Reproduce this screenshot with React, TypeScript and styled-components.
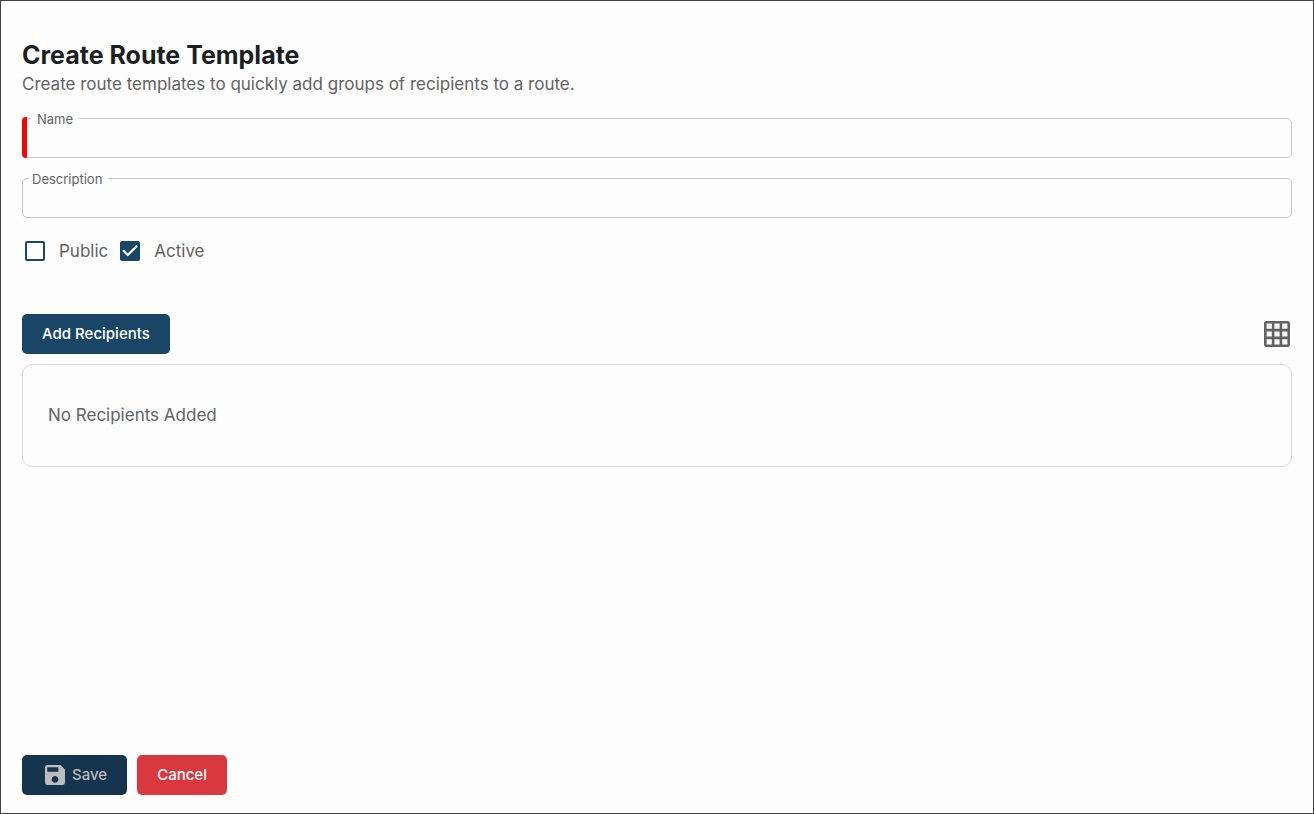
import React from "react";
import styled, { createGlobalStyle } from "styled-components";

const GlobalStyle = createGlobalStyle`
  *, *::before, *::after { box-sizing: border-box; }
  body {
    margin: 0;
    background: #fdfdfd;
    color: #626262;
    font-family: Inter, "Liberation Sans", sans-serif;
    font-size: 17px;
    line-height: 24px;
  }
  button, input { font: inherit; }
`;

const Page = styled.main`
  display: flex;
  flex-direction: column;
  min-height: 100vh;
  padding: 38px 21px 18px;
  border: 1px solid #444;
`;

const Title = styled.h1`
  margin: 0;
  color: #1c1f22;
  font-size: 25px;
  font-weight: 700;
  line-height: 33px;
`;

const Subtitle = styled.p`
  margin: 0 0 22px;
`;

const Form = styled.form`
  display: flex;
  flex: 1;
  flex-direction: column;
`;

const Field = styled.div<{ $required?: boolean }>`
  position: relative;
  margin-bottom: 20px;

  &::before {
    content: ${(p) => (p.$required ? '""' : "none")};
    position: absolute;
    top: -1px;
    bottom: 0;
    left: 0;
    width: 5px;
    border-radius: 4px 0 0 4px;
    background: #f00;
  }
`;

const FieldLabel = styled.label<{ $required?: boolean }>`
  position: absolute;
  top: -8px;
  left: ${(p) => (p.$required ? 9 : 6)}px;
  padding: 0 6px 0 ${(p) => (p.$required ? 6 : 4)}px;
  background: #fdfdfd;
  font-size: 13px;
  line-height: 18px;
`;

const TextInput = styled.input`
  display: block;
  width: 100%;
  height: 40px;
  padding: 0 14px;
  border: 1px solid #c8c8c8;
  border-radius: 5px;
  outline: none;
  background: transparent;
  color: #1c1f22;
`;

const Checks = styled.div`
  display: flex;
  gap: 12px;
  padding: 1px 3px;
`;

const CheckLabel = styled.label`
  display: flex;
  align-items: center;
  gap: 14px;
`;

const CheckMark = styled.span`
  display: grid;
  width: 20px;
  height: 20px;

  > * { grid-area: 1 / 1; }
  svg { width: 20px; height: 20px; pointer-events: none; }
`;

const CheckInput = styled.input`
  width: 20px;
  height: 20px;
  margin: 0;
  appearance: none;
  border: 2px solid #194666;
  border-radius: 2px;

  &:checked { background: #194666; }
  &:not(:checked) + svg { visibility: hidden; }
`;

const Toolbar = styled.div`
  display: flex;
  align-items: center;
  justify-content: space-between;
  margin: 50px 0 10px;
`;

const Button = styled.button<{ $tone?: "danger" }>`
  display: flex;
  align-items: center;
  gap: 7px;
  height: 40px;
  padding: 0 20px;
  border: 0;
  border-radius: 5px;
  background: ${(p) => (p.$tone === "danger" ? "#d9383e" : "#194666")};
  color: #fff;
  font-size: 15px;
  font-weight: 500;

  &:disabled { background: #14354d; color: #bcbcbc; }
  svg { width: 20px; height: 20px; margin-left: 3px; }
`;

const IconButton = styled.button`
  display: flex;
  padding: 2px;
  border: 0;
  background: none;
  color: #626262;

  svg { width: 26px; height: 26px; }
`;

const Panel = styled.section`
  padding: 38px 25px 39px;
  border: 1px solid #d8d8d8;
  border-radius: 10px;
`;

const Footer = styled.footer`
  display: flex;
  gap: 10px;
  margin-top: auto;
`;

function Check({ label, checked }: { label: string; checked?: boolean }) {
  return (
    <CheckLabel>
      <CheckMark>
        <CheckInput type="checkbox" defaultChecked={checked} />
        <svg viewBox="3 3 18 18" aria-hidden="true">
          <path fill="#fff" d="m10 17-5-5 1.41-1.41L10 14.17l7.59-7.59L19 8z" />
        </svg>
      </CheckMark>
      {label}
    </CheckLabel>
  );
}

export default function App() {
  return (
    <>
      <GlobalStyle />
      <Page>
        <Title>Create Route Template</Title>
        <Subtitle>Create route templates to quickly add groups of recipients to a route.</Subtitle>
        <Form onSubmit={(e) => e.preventDefault()}>
          <Field $required>
            <TextInput id="name" type="text" required />
            <FieldLabel htmlFor="name" $required>Name</FieldLabel>
          </Field>
          <Field>
            <TextInput id="description" type="text" />
            <FieldLabel htmlFor="description">Description</FieldLabel>
          </Field>
          <Checks>
            <Check label="Public" />
            <Check label="Active" checked />
          </Checks>
          <Toolbar>
            <Button type="button">Add Recipients</Button>
            <IconButton type="button" aria-label="Grid view">
              <svg viewBox="2 2 20 20" fill="currentColor" aria-hidden="true">
                <path d="M20 2H4c-1.1 0-2 .9-2 2v16c0 1.1.9 2 2 2h16c1.1 0 2-.9 2-2V4c0-1.1-.9-2-2-2zM8 20H4v-4h4v4zm0-6H4v-4h4v4zm0-6H4V4h4v4zm6 12h-4v-4h4v4zm0-6h-4v-4h4v4zm0-6h-4V4h4v4zm6 12h-4v-4h4v4zm0-6h-4v-4h4v4zm0-6h-4V4h4v4z" />
              </svg>
            </IconButton>
          </Toolbar>
          <Panel>No Recipients Added</Panel>
          <Footer>
            <Button type="submit" disabled>
              <svg viewBox="3 3 18 18" fill="currentColor" aria-hidden="true">
                <path d="M17 3H5c-1.11 0-2 .9-2 2v14c0 1.1.89 2 2 2h14c1.1 0 2-.9 2-2V7l-4-4zm-5 16c-1.66 0-3-1.34-3-3s1.34-3 3-3 3 1.34 3 3-1.34 3-3 3zm3-10H5V5h10v4z" />
              </svg>
              Save
            </Button>
            <Button type="button" $tone="danger">Cancel</Button>
          </Footer>
        </Form>
      </Page>
    </>
  );
}
